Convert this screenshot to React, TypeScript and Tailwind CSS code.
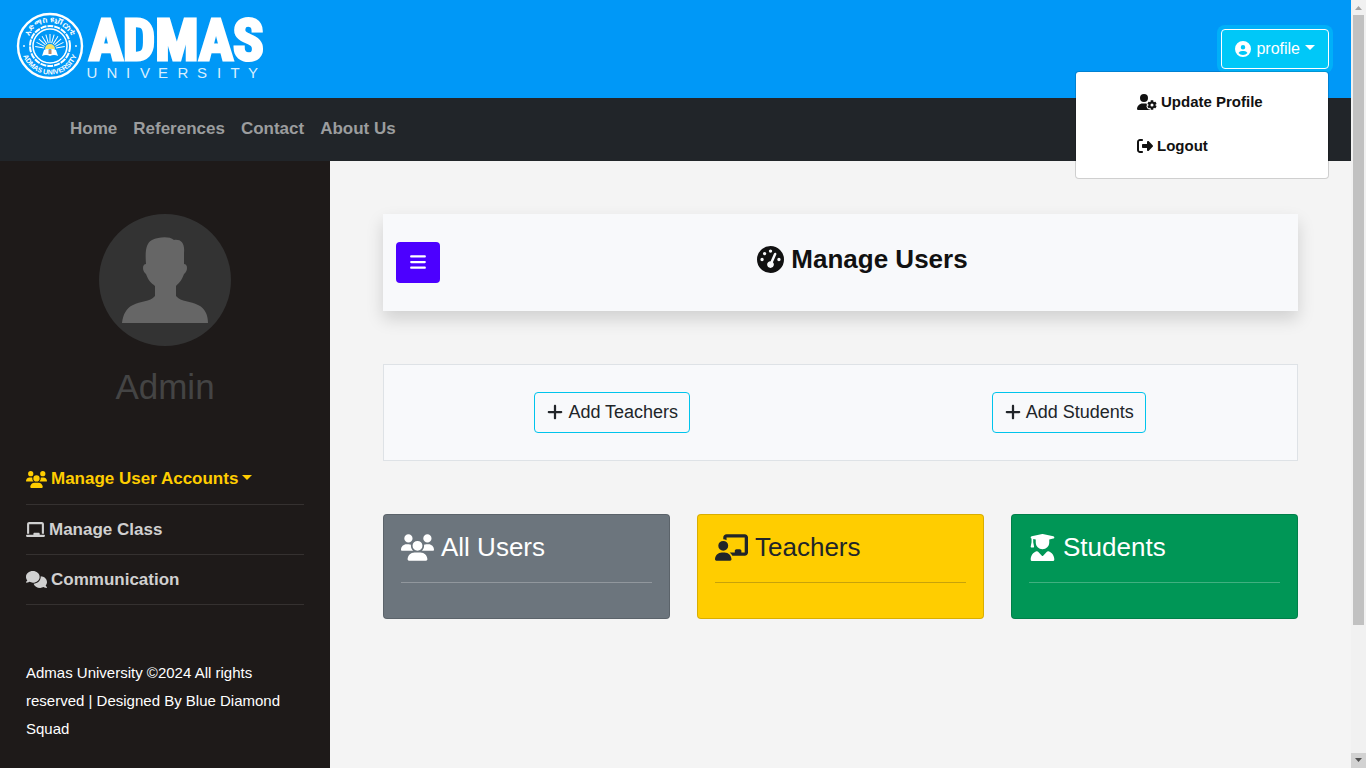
import type { ReactNode } from "react";
import {
  FaBars,
  FaChalkboard,
  FaChalkboardUser,
  FaCircleUser,
  FaComments,
  FaGaugeHigh,
  FaPlus,
  FaRightFromBracket,
  FaUserGear,
  FaUserGraduate,
  FaUsers,
} from "react-icons/fa6";

const RAYS = [-80, -64, -48, -32, -16, 0, 16, 32, 48, 64, 80];

function Logo() {
  return (
    <svg width="260" height="74" viewBox="0 0 260 74" role="img" aria-label="Admas University">
      <defs>
        <path id="seal-top" d="M 11.500 37 A 23.500 23.500 0 0 1 58.500 37" />
        <path id="seal-bottom" d="M 6.500 37 A 28.500 28.500 0 0 0 63.500 37" />
      </defs>
      <g fill="none" stroke="#fff">
        <circle cx="35" cy="37" r="32" strokeWidth="2.400" />
        <circle cx="35" cy="37" r="20" strokeWidth="2" strokeDasharray="6 1" />
        <circle cx="35" cy="37" r="17" strokeWidth="1.500" />
        {RAYS.map((a) => (
          <line key={a} x1="35" y1="34" x2="35" y2="25" strokeWidth="1" transform={`rotate(${a} 35 40)`} />
        ))}
      </g>
      <path d="M30 40a5 5 0 0 1 10 0z" fill="#f3e26b" />
      <path d="M27 47l2-6q3-2 6 0q3-2 6 0l2 6q-4-2-8 0q-4-2-8 0z" fill="#fff" />
      <path d="M33.500 41h3v4h-3z" fill="#b98a6a" />
      <circle cx="9" cy="37" r="0.900" fill="#fff" />
      <circle cx="61" cy="37" r="0.900" fill="#fff" />
      <g fill="#fff" fontFamily="'Liberation Sans', sans-serif" textAnchor="middle">
        <text fontSize="8" fontWeight="700">
          <textPath href="#seal-top" startOffset="50%">አድማስ ዩኒቨርስቲ</textPath>
        </text>
        <text fontSize="7" fontWeight="700">
          <textPath href="#seal-bottom" startOffset="50%">ADMAS UNIVERSITY</textPath>
        </text>
      </g>
      <text
        x="74"
        y="51"
        fill="#fff"
        stroke="#fff"
        strokeWidth="3"
        fontSize="57"
        fontWeight="700"
        fontFamily="'Liberation Sans Narrow', 'Roboto Condensed', 'Liberation Sans', sans-serif"
      >
        ADMAS
      </text>
      <text
        x="77 97 113 130 148 168 187 204 220 238"
        y="69"
        fill="#d9effe"
        fontSize="15"
        fontFamily="'Liberation Sans Narrow', 'Liberation Sans', sans-serif"
        textAnchor="middle"
      >
        UNIVERSITY
      </text>
    </svg>
  );
}

function Caret() {
  return (
    <svg className="mb-[3px]" width="10" height="5" viewBox="0 0 10 5" fill="currentColor" aria-hidden="true">
      <path d="M0 0h10L5 5z" />
    </svg>
  );
}

function Avatar() {
  return (
    <svg className="mx-auto block" width="132" height="132" viewBox="0 0 132 132" role="img" aria-label="Admin avatar">
      <circle cx="66" cy="66" r="66" fill="#333" />
      <path
        fill="#666"
        d="M47 50C46 37 47 29 53 26C60 23 70 22 75 26C82 25 86 29 85 39L85 50C89 50 89 57 85 60C83 66 80 69 77 72L77 82C82 88 92 87 99 91C106 94 109 101 109 109H23C24 101 27 94 34 91C41 87 51 88 56 82L56 72C52 69 49 66 47 60C43 57 43 50 47 50Z"
      />
    </svg>
  );
}

function Header() {
  return (
    <header className="relative flex h-[98px] shrink-0 items-center justify-between bg-[#0098f7] pr-[22px] pl-[15px]">
      <a href="#" className="-mt-1.5">
        <Logo />
      </a>
      <button
        type="button"
        aria-expanded="true"
        className="flex h-10 items-center gap-[5px] rounded-sm border border-white bg-[#00c8f8] px-[13px] text-base text-white ring-4 ring-[#00b0f8]"
      >
        <FaCircleUser />
        profile
        <Caret />
      </button>
      <div
        role="menu"
        className="absolute top-[71px] right-[22px] z-10 flex h-[108px] w-[254px] flex-col rounded-sm border border-black/15 bg-white bg-clip-padding py-2 text-[15px] font-bold text-[#111]"
      >
        <a role="menuitem" href="#" className="flex h-11 items-center gap-1 pl-[61px]">
          <FaUserGear className="h-4 w-5" />
          Update Profile
        </a>
        <a role="menuitem" href="#" className="flex h-11 items-center gap-1 pl-[61px]">
          <FaRightFromBracket className="h-4 w-4" />
          Logout
        </a>
      </div>
    </header>
  );
}

function SideLink({ icon, label, active }: { icon: ReactNode; label: string; active?: boolean }) {
  return (
    <li className="border-b border-[#353130]">
      <a
        href="#"
        className={
          active
            ? "flex h-[49px] items-center gap-1 pb-px font-bold text-[#ffcd00]"
            : "flex h-[49px] items-center gap-1 font-bold text-[#d0d0d0]"
        }
      >
        {icon}
        {label}
        {active && <Caret />}
      </a>
    </li>
  );
}

function Sidebar() {
  return (
    <aside className="w-[330px] shrink-0 bg-[#1e1a19] px-[26px] pt-[53px]">
      <Avatar />
      <h3 className="mt-5 text-center text-[35px] leading-[42px] text-[#444]">Admin</h3>
      <ul className="mt-[47px] text-[17px]">
        <SideLink icon={<FaUsers className="h-[17px] w-[21px]" />} label="Manage User Accounts" active />
        <SideLink icon={<FaChalkboard className="h-[17px] w-[19px]" />} label="Manage Class" />
        <SideLink icon={<FaComments className="h-[17px] w-[21px]" />} label="Communication" />
      </ul>
      <p className="mt-[54px] text-[15px] leading-7 text-white">
        Admas University ©2024 All rights reserved | Designed By Blue Diamond Squad
      </p>
    </aside>
  );
}

function AddButton({ label }: { label: string }) {
  return (
    <button
      type="button"
      className="flex h-[41px] items-center gap-1 rounded-sm border border-[#00c4ec] px-[11px] pb-0.5 text-lg text-[#212529]"
    >
      <FaPlus />
      {label}
    </button>
  );
}

function StatCard({ icon, label, tone }: { icon: ReactNode; label: string; tone: string }) {
  return (
    <section className={`h-[105px] rounded-sm border border-black/15 px-[17px] pt-4 ${tone}`}>
      <h4 className="flex h-8 items-center gap-[7px] text-[26px]">
        {icon}
        {label}
      </h4>
      <hr className="mt-[19px] border-current opacity-25" />
    </section>
  );
}

function Scrollbar() {
  return (
    <div aria-hidden="true" className="flex w-[15px] shrink-0 flex-col items-center bg-[#f1f1f1]">
      <svg width="15" height="15" viewBox="0 0 15 15">
        <path d="M4 10h7L7.500 6z" fill="#a3a3a3" />
      </svg>
      <div className="w-[11px] grow-[610] bg-[#c1c1c1]" />
      <div className="grow-[128]" />
      <svg width="15" height="15" viewBox="0 0 15 15" className="bg-[#d2d2d2]">
        <path d="M4 5h7L7.500 9z" fill="#505050" />
      </svg>
    </div>
  );
}

export default function App() {
  return (
    <div className="flex h-screen overflow-hidden bg-[#f4f4f4] font-['Liberation_Sans',Arial,sans-serif]">
      <div className="flex min-w-0 flex-1 flex-col">
        <Header />
        <nav className="flex h-[63px] shrink-0 items-center gap-4 bg-[#212529] pb-0.5 pl-[70px] text-[17px] font-bold text-[#9b9d9e]">
          <a href="#">Home</a>
          <a href="#">References</a>
          <a href="#">Contact</a>
          <a href="#">About Us</a>
        </nav>
        <div className="flex min-h-0 flex-1">
          <Sidebar />
          <main className="flex min-w-0 flex-1 flex-col gap-[53px] p-[53px]">
            <div className="flex h-[97px] items-center bg-[#f8f9fb] px-[13px] shadow-[0_8px_16px_rgba(0,0,0,0.15)]">
              <button
                type="button"
                aria-label="Toggle sidebar"
                className="flex h-[41px] w-11 items-center justify-center rounded-sm bg-[#4c00ff] pb-0.5 text-lg text-white"
              >
                <FaBars />
              </button>
              <h4 className="mb-1.5 flex flex-1 items-center justify-center gap-[7px] text-[26px] font-bold text-[#111]">
                <FaGaugeHigh className="h-[27px] w-[27px]" />
                Manage Users
              </h4>
            </div>
            <div className="grid h-[97px] grid-cols-2 place-items-center border border-[#dee2e6] bg-[#f8f9fb]">
              <AddButton label="Add Teachers" />
              <AddButton label="Add Students" />
            </div>
            <div className="grid grid-cols-3 gap-[27px]">
              <StatCard icon={<FaUsers className="h-[27px] w-[33px]" />} label="All Users" tone="bg-[#6c757d] text-white" />
              <StatCard
                icon={<FaChalkboardUser className="h-[27px] w-[33px]" />}
                label="Teachers"
                tone="bg-[#ffcd00] text-[#212529]"
              />
              <StatCard
                icon={<FaUserGraduate className="h-[27px] w-[27px]" />}
                label="Students"
                tone="bg-[#009656] text-white"
              />
            </div>
          </main>
        </div>
      </div>
      <Scrollbar />
    </div>
  );
}
